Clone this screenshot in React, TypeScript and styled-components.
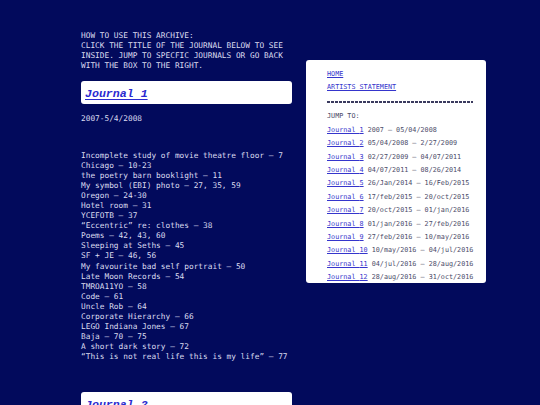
import styled, { createGlobalStyle } from "styled-components";

const GlobalStyle = createGlobalStyle`
  html, body {
    margin: 0;
    padding: 0;
    background: #020a5c;
  }
  body {
    font-family: "DejaVu Sans Mono", "Liberation Mono", monospace;
  }
`;

const Page = styled.div`
  display: flex;
  align-items: flex-start;
  gap: 14px;
  padding: 0 0 40px 81px;
`;

const Archive = styled.main`
  width: 211px;
  padding-top: 31px;
  color: #dcdcf0;
  font-size: 7.8px;
`;

const HowTo = styled.p`
  margin: 0;
  line-height: 10px;
  text-transform: uppercase;
`;

const JournalTitle = styled.a<{ $gap: number }>`
  display: flex;
  align-items: center;
  box-sizing: border-box;
  height: 23px;
  margin-top: ${(p) => p.$gap}px;
  padding: 1px 4px 0;
  background: #ffffff;
  border-radius: 3px;
  color: #2a2ad0;
  font-family: "Liberation Mono", "DejaVu Sans Mono", monospace;
  font-size: 11.6px;
  font-weight: bold;
  font-style: italic;
  text-decoration: underline;
  text-underline-offset: 1.5px;
`;

const DateRange = styled.p`
  margin: 10px 0 0;
  line-height: 10px;
`;

const Contents = styled.ul`
  list-style: none;
  margin: 26.5px 0 0;
  padding: 0;
  line-height: 10.1px;
  white-space: pre;
`;

const Sidebar = styled.aside`
  box-sizing: border-box;
  width: 180px;
  height: 223px;
  margin-top: 60px;
  padding: 8px 13px 0 21px;
  background: #ffffff;
  border-radius: 3px;
  overflow: hidden;
  font-size: 6.75px;
  line-height: 13.4px;
  color: #4a4a68;
`;

const NavLink = styled.a`
  display: block;
  color: #3535cc;
  text-decoration: underline;
  text-transform: uppercase;
`;

const Rule = styled.div`
  height: 2px;
  margin: 6px 0 7.5px;
  background: repeating-linear-gradient(
    to right,
    #3a3a5e 0 3px,
    transparent 3px 4px
  );
`;

const JumpLabel = styled.div`
  text-transform: uppercase;
`;

const JumpRow = styled.div`
  white-space: nowrap;
`;

const JumpLink = styled.a`
  color: #3535cc;
  text-decoration: underline;
`;

const journalOne = [
  "Incomplete study of movie theatre floor – 7",
  "Chicago – 10-23",
  "the poetry barn booklight – 11",
  "My symbol (EBI) photo – 27, 35, 59",
  "Oregon – 24-30",
  "Hotel room – 31",
  "YCEFOTB – 37",
  "“Eccentric” re: clothes – 38",
  "Poems – 42, 43, 60",
  "Sleeping at Seths – 45",
  "SF + JE – 46, 56",
  "My favourite bad self portrait – 50",
  "Late Moon Records – 54",
  "TMROA11YO – 58",
  "Code – 61",
  "Uncle Rob – 64",
  "Corporate Hierarchy – 66",
  "LEGO Indiana Jones – 67",
  "Baja – 70 – 75",
  "A short dark story – 72",
  "“This is not real life this is my life” – 77",
];

const journalTwo = [
  "Portland – 3-9",
  "Kitchen table – 12",
  "Night bus – 18",
];

const jumps = [
  "2007 – 05/04/2008",
  "05/04/2008 – 2/27/2009",
  "02/27/2009 – 04/07/2011",
  "04/07/2011 – 08/26/2014",
  "26/Jan/2014 – 16/Feb/2015",
  "17/feb/2015 – 20/oct/2015",
  "20/oct/2015 – 01/jan/2016",
  "01/jan/2016 – 27/feb/2016",
  "27/feb/2016 – 10/may/2016",
  "10/may/2016 – 04/jul/2016",
  "04/jul/2016 – 28/aug/2016",
  "28/aug/2016 – 31/oct/2016",
  "31/oct/2016 – 02/jan/2017",
  "02/jan/2017 – 14/mar/2017",
];

export default function App() {
  return (
    <>
      <GlobalStyle />
      <Page>
        <Archive>
          <HowTo>
            How to use this archive:
            <br />
            Click the title of the journal below to see inside. Jump to
            specfic journals or go back with the box to the right.
          </HowTo>

          <JournalTitle href="#journal-1" id="journal-1" $gap={10}>
            Journal 1
          </JournalTitle>
          <DateRange>2007-5/4/2008</DateRange>
          <Contents>
            {journalOne.map((item) => (
              <li key={item}>{item}</li>
            ))}
          </Contents>

          <JournalTitle href="#journal-2" id="journal-2" $gap={30}>
            Journal 2
          </JournalTitle>
          <DateRange>5/4/2008-2/27/2009</DateRange>
          <Contents>
            {journalTwo.map((item) => (
              <li key={item}>{item}</li>
            ))}
          </Contents>
        </Archive>

        <Sidebar>
          <NavLink href="#">Home</NavLink>
          <NavLink href="#">Artists statement</NavLink>
          <Rule />
          <JumpLabel>Jump to:</JumpLabel>
          {jumps.map((range, i) => (
            <JumpRow key={range}>
              <JumpLink href={`#journal-${i + 1}`}>Journal {i + 1}</JumpLink>{" "}
              {range}
            </JumpRow>
          ))}
        </Sidebar>
      </Page>
    </>
  );
}
